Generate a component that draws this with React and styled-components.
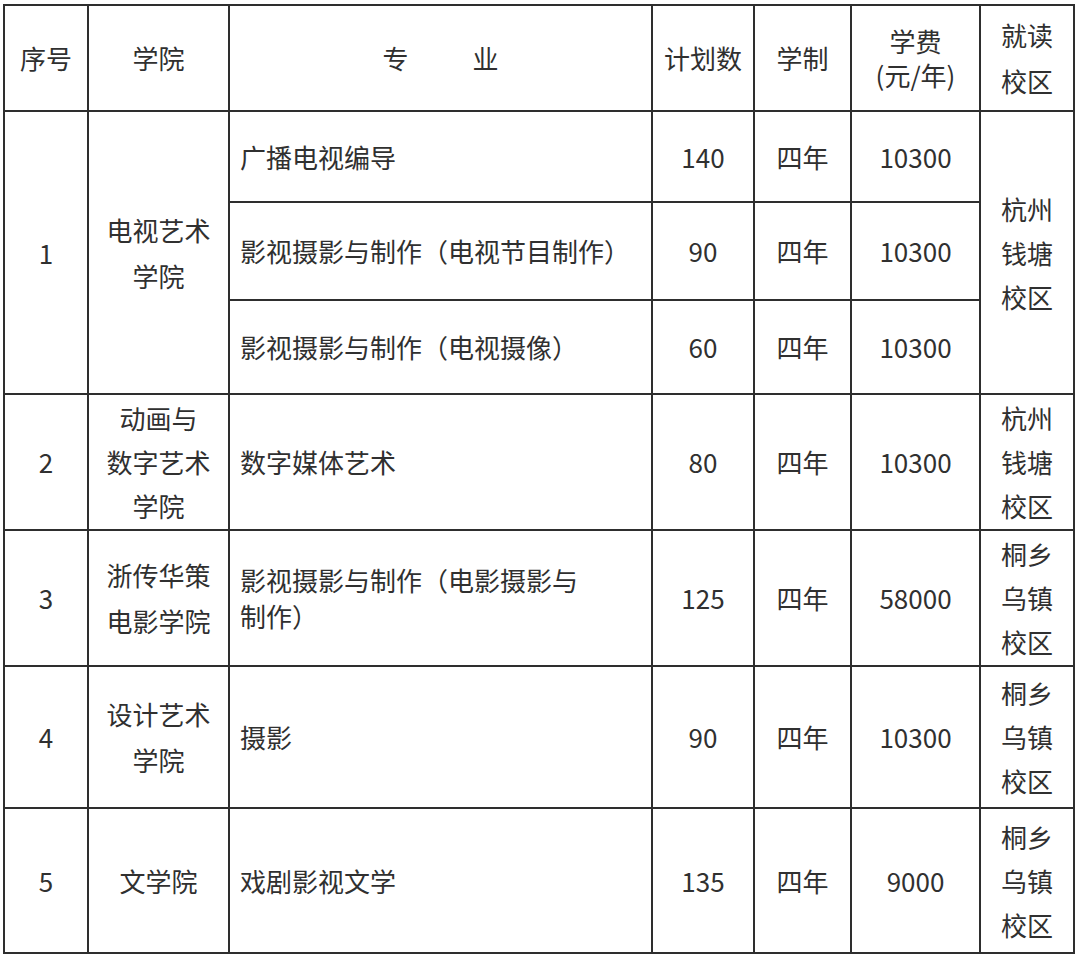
import React from 'react'
import styled, {createGlobalStyle} from 'styled-components'

const GlobalStyle = createGlobalStyle`
  html, body {
    margin: 0;
    padding: 0;
    background: #ffffff;
  }
  body {
    font-family: "Noto Sans CJK SC", "Noto Sans", sans-serif;
    color: #303030;
  }
`

const header = [
  {lines: ['序号']},
  {lines: ['学院']},
  {split: ['专', '业']},
  {lines: ['计划数']},
  {lines: ['学制']},
  {lines: ['学费', '(元/年)'], lh: 34},
  {lines: ['就读', '校区'], lh: 46},
]

const groups = [
  {
    no: '1',
    college: ['电视艺术', '学院'],
    campus: ['杭州', '钱塘', '校区'],
    majors: [
      {name: ['广播电视编导'], plan: '140', years: '四年', fee: '10300'},
      {name: ['影视摄影与制作（电视节目制作）'], plan: '90', years: '四年', fee: '10300'},
      {name: ['影视摄影与制作（电视摄像）'], plan: '60', years: '四年', fee: '10300'},
    ],
  },
  {
    no: '2',
    college: ['动画与', '数字艺术', '学院'],
    campus: ['杭州', '钱塘', '校区'],
    majors: [{name: ['数字媒体艺术'], plan: '80', years: '四年', fee: '10300'}],
  },
  {
    no: '3',
    college: ['浙传华策', '电影学院'],
    campus: ['桐乡', '乌镇', '校区'],
    majors: [{name: ['影视摄影与制作（电影摄影与', '制作）'], plan: '125', years: '四年', fee: '58000'}],
  },
  {
    no: '4',
    college: ['设计艺术', '学院'],
    campus: ['桐乡', '乌镇', '校区'],
    majors: [{name: ['摄影'], plan: '90', years: '四年', fee: '10300'}],
  },
  {
    no: '5',
    college: ['文学院'],
    campus: ['桐乡', '乌镇', '校区'],
    majors: [{name: ['戏剧影视文学'], plan: '135', years: '四年', fee: '9000'}],
  },
]

function Lines({lines}) {
  return lines.map((l, i) => <Line key={i}>{l}</Line>)
}

function App() {
  return (
    <>
      <GlobalStyle />
      <Page>
        <Table>
          {header.map((h, i) => (
            <Cell key={'h' + i} $lh={h.lh}>
              {h.split ? (
                <Split>
                  <span>{h.split[0]}</span>
                  <span>{h.split[1]}</span>
                </Split>
              ) : (
                <Lines lines={h.lines} />
              )}
            </Cell>
          ))}
          {groups.map((g) => {
            const span = g.majors.length
            return (
              <React.Fragment key={g.no}>
                <Cell $span={span}>{g.no}</Cell>
                <Cell $span={span} $lh={g.college.length === 3 ? 44 : 46}>
                  <Lines lines={g.college} />
                </Cell>
                {g.majors.map((m, i) => (
                  <React.Fragment key={i}>
                    <Cell $left $lh={36}>
                      <Lines lines={m.name} />
                    </Cell>
                    <Cell>{m.plan}</Cell>
                    <Cell>{m.years}</Cell>
                    <Cell>{m.fee}</Cell>
                    {i === 0 && (
                      <Cell $span={span} $lh={44}>
                        <Lines lines={g.campus} />
                      </Cell>
                    )}
                  </React.Fragment>
                ))}
              </React.Fragment>
            )
          })}
        </Table>
      </Page>
    </>
  )
}

const Page = styled.div`
  padding: 4px 0 0 3px;
  width: 1080px;
  height: 959px;
  box-sizing: border-box;
`

const Table = styled.div`
  display: grid;
  grid-template-columns: 82px 139px 421px 100px 95px 127px 92px;
  grid-template-rows: 104px 89px 96px 92px 134px 134px 140px 143px;
  gap: 2px;
  padding: 2px;
  width: max-content;
  background: #2e2e2e;
`

const Cell = styled.div`
  background: #ffffff;
  display: flex;
  flex-direction: column;
  justify-content: center;
  align-items: ${(p) => (p.$left ? 'flex-start' : 'center')};
  text-align: ${(p) => (p.$left ? 'left' : 'center')};
  padding: ${(p) => (p.$left ? '0 12px 0 10px' : '0')};
  grid-row: ${(p) => (p.$span ? `span ${p.$span}` : 'auto')};
  font-size: 26px;
  line-height: ${(p) => (p.$lh ? p.$lh + 'px' : '36px')};
  min-width: 0;
`

const Line = styled.span`
  display: block;
  white-space: nowrap;
`

const Split = styled.div`
  display: flex;
  gap: 64px;
`

export default App
